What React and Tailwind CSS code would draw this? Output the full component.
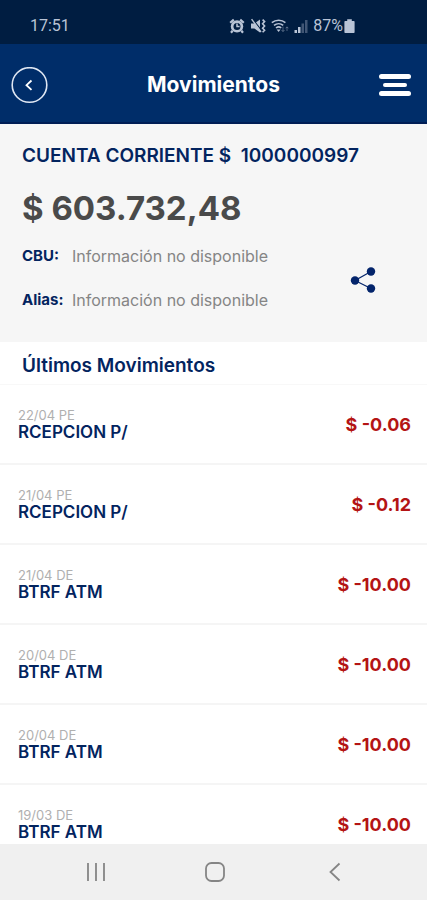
import React from 'react';

const details = [
    { label: 'CBU:', value: 'Información no disponible' },
    { label: 'Alias:', value: 'Información no disponible' },
];

const movements = [
    { id: 1, date: '22/04 PE', name: 'RCEPCION P/', amount: '$ -0.06' },
    { id: 2, date: '21/04 PE', name: 'RCEPCION P/', amount: '$ -0.12' },
    { id: 3, date: '21/04 DE', name: 'BTRF ATM', amount: '$ -10.00' },
    { id: 4, date: '20/04 DE', name: 'BTRF ATM', amount: '$ -10.00' },
    { id: 5, date: '20/04 DE', name: 'BTRF ATM', amount: '$ -10.00' },
    { id: 6, date: '19/03 DE', name: 'BTRF ATM', amount: '$ -10.00' },
];

function AlarmIcon() {
    return (
        <svg viewBox="0 0 16 16" className="h-4 w-4">
            <path d="M1.200 4.800 4.800 1.600M14.800 4.800 11.200 1.600M3.600 12.800 2 14.800M12.400 12.800l1.600 2" stroke="currentColor" strokeWidth="2.200" />
            <circle cx="8" cy="8.400" r="6.200" fill="currentColor" />
            <circle cx="8" cy="8.400" r="3.500" fill="#001d41" />
            <path d="M8 5.600v3h2.600" fill="none" stroke="currentColor" strokeWidth="1.500" />
        </svg>
    );
}

function VibrateIcon() {
    return (
        <svg viewBox="0 0 16 16" className="h-4 w-4">
            <path d="M1 5.400h3.400L10 1.600v13L4.400 10.600H1z" fill="currentColor" />
            <path d="M2.800 1.200 11.800 12.800" stroke="#001d41" strokeWidth="1.200" />
            <path d="M1.600 1.200 11 14" stroke="currentColor" strokeWidth="1.400" />
            <path d="m12.600 1.600 2 2-2 2.200 2 2.200-2 2.200 2 2-2 2" fill="none" stroke="currentColor" strokeWidth="1.600" />
        </svg>
    );
}

function WifiIcon() {
    return (
        <svg viewBox="0 0 18 16" className="h-4 w-[18px]" fill="none" stroke="currentColor">
            <path d="M.8 4.600c4-3.200 9.800-3.200 13.600 0" strokeWidth="1.600" />
            <path d="M3 7.400c2.800-2.200 6.600-2.200 9.200 0" strokeWidth="1.600" />
            <path d="M5 10c1.600-1.300 3.800-1.300 5.200 0" strokeWidth="1.600" />
            <path d="m5.600 11.400 2 2.600 2-2.600z" fill="currentColor" stroke="none" />
            <path d="M12 8.600v4.800m-1.500-1.400 1.500 1.600 1.500-1.600M16 13V9m-1.400 1.300L16 8.800l1.400 1.500" strokeWidth="1" opacity=".4" />
        </svg>
    );
}

function SignalIcon() {
    return (
        <svg viewBox="0 0 14 16" className="h-4 w-[14px]" fill="currentColor">
            <path d="M.5 12H3v3H.5zM4 9h2.500v6H4z" />
            <path d="M7.500 5.500H10V15H7.500zM11 2h2.500v13H11z" opacity=".35" />
        </svg>
    );
}

function BatteryIcon() {
    return (
        <svg viewBox="0 0 11 16" className="h-4 w-[11px]" fill="currentColor">
            <path d="M3.200 1.200h4.600v1.800h2a.8.8 0 0 1 .8.8v10.400a.8.8 0 0 1-.8.8H1.200a.8.8 0 0 1-.8-.8V3.800a.8.8 0 0 1 .8-.8h2z" />
        </svg>
    );
}

function StatusBar() {
    return (
        <div className="flex h-11 shrink-0 items-center justify-between bg-[#001d41] pt-2 pr-[72px] pl-[30px] font-[Roboto,sans-serif] text-[16px] text-[#b9c4d6]">
            <span>17:51</span>
            <div className="flex items-center gap-[5px]">
                <AlarmIcon />
                <VibrateIcon />
                <WifiIcon />
                <SignalIcon />
                <div className="flex items-center gap-px">
                    <span>87%</span>
                    <BatteryIcon />
                </div>
            </div>
        </div>
    );
}

function Header() {
    return (
        <header className="flex h-20 shrink-0 items-center justify-between border-b-2 border-[#001d55] bg-[#002d69] pt-1 pr-4 pl-[11px] text-white">
            <button type="button" aria-label="Volver" className="h-[37px] w-[37px]">
                <svg viewBox="0 0 37 37" className="h-full w-full" fill="none" stroke="currentColor">
                    <circle cx="18.500" cy="18" r="17.300" strokeWidth="1.600" stroke="#dfe7f3" />
                    <path d="m20.500 13.500-5 4.700 5 4.700" strokeWidth="1.800" />
                </svg>
            </button>
            <h1 className="text-[21px] font-bold">Movimientos</h1>
            <button type="button" aria-label="Menú" className="flex w-8 flex-col items-center gap-1">
                <span className="h-[5px] w-full rounded-sm bg-white" />
                <span className="h-1 w-6 rounded-sm bg-white" />
                <span className="h-[5px] w-full rounded-sm bg-white" />
            </button>
        </header>
    );
}

function Account() {
    return (
        <section className="shrink-0 bg-[#f6f6f6] px-[22px] pt-5 pb-8">
            <h2 className="text-[19px] leading-6 font-semibold whitespace-pre text-[#03245f]">{'CUENTA CORRIENTE $  1000000997'}</h2>
            <p className="mt-5 text-[33px] leading-10 font-bold text-[#4a4a4a]">$ 603.732,48</p>
            <div className="mt-[18px] flex items-center justify-between pr-7">
                <dl className="flex flex-col gap-6">
                    {details.map((item) => (
                        <div key={item.label} className="flex leading-5">
                            <dt className="w-[50px] text-[15px] font-bold text-[#03245f]">{item.label}</dt>
                            <dd className="text-[16px] text-[#858585]">{item.value}</dd>
                        </div>
                    ))}
                </dl>
                <button type="button" aria-label="Compartir" className="pt-1 text-[#03246b]">
                    <svg viewBox="0 0 28 28" className="h-7 w-7" fill="currentColor">
                        <path d="M22 5.500 6 14.500 22 22.500" fill="none" stroke="currentColor" strokeWidth="1.200" />
                        <circle cx="22" cy="5.500" r="4.200" />
                        <circle cx="6" cy="14.500" r="4.200" />
                        <circle cx="22" cy="22.500" r="4.200" />
                    </svg>
                </button>
            </div>
        </section>
    );
}

function NavBar() {
    return (
        <nav className="flex h-14 shrink-0 items-center justify-around bg-[#f0f0f0] pr-8 pl-9 text-[#858585]">
            <button type="button" aria-label="Recientes">
                <svg viewBox="0 0 20 20" className="h-5 w-5" stroke="currentColor" strokeWidth="1.800">
                    <path d="M2 1v18M10 1v18M18 1v18" />
                </svg>
            </button>
            <button type="button" aria-label="Inicio">
                <svg viewBox="0 0 20 20" className="h-5 w-5" fill="none" stroke="currentColor" strokeWidth="1.800">
                    <rect x="1" y="1" width="18" height="18" rx="5.500" />
                </svg>
            </button>
            <button type="button" aria-label="Atrás">
                <svg viewBox="0 0 20 20" className="h-5 w-5" fill="none" stroke="currentColor" strokeWidth="1.800">
                    <path d="M14.500 1.500 5.500 10l9 8.500" />
                </svg>
            </button>
        </nav>
    );
}

export default function App() {
    return (
        <div className="flex h-screen flex-col bg-white font-[Inter,sans-serif]">
            <StatusBar />
            <Header />
            <Account />
            <main className="min-h-0 flex-1 overflow-hidden">
                <h2 className="border-b border-[#f8f8f8] px-[22px] pt-[10px] pb-1 text-[19px] leading-7 font-semibold text-[#03245f]">Últimos Movimientos</h2>
                <ul>
                    {movements.map((mov) => (
                        <li key={mov.id} className="flex h-20 items-center justify-between border-b-2 border-[#f5f5f5] pr-4 pl-[18px]">
                            <div>
                                <p className="text-[13px] leading-4 text-[#b0b0b0]">{mov.date}</p>
                                <p className="text-[17px] leading-[18px] font-semibold text-[#03245f]">{mov.name}</p>
                            </div>
                            <span className="text-[18px] font-bold text-[#b41414]">{mov.amount}</span>
                        </li>
                    ))}
                </ul>
            </main>
            <NavBar />
        </div>
    );
}
